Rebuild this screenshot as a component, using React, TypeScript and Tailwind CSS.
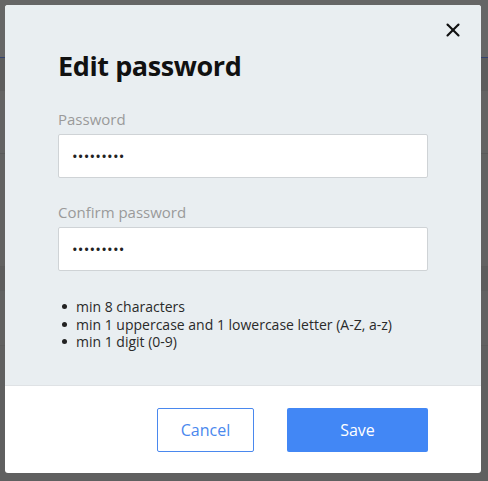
import { X } from 'lucide-react'

const rules = [
  'min 8 characters',
  'min 1 uppercase and 1 lowercase letter (A-Z, a-z)',
  'min 1 digit (0-9)',
]

function Field({ label }: { label: string }) {
  return (
    <div className="flex flex-col">
      <label className="text-[15px] leading-[20px] text-[#9a9a9a]">{label}</label>
      <div className="mt-[5px] flex h-[44px] w-[370px] items-center rounded-[2px] border border-[#cfd3d6] bg-white pl-[13px] text-[15px] tracking-[0.2px] text-[#222]">
        •••••••••
      </div>
    </div>
  )
}

export default function App() {
  return (
    <div className="relative h-[481px] w-[488px] overflow-hidden bg-[#646464]" style={{ fontFamily: '"Open Sans", sans-serif' }}>
      {/* page behind the overlay */}
      <div className="flex flex-col">
        <div className="h-[57px] bg-[#666666]" />
        <div className="h-[1px] bg-[#34426e]" />
        <div className="h-[33px] bg-[#5d5d5d]" />
        <div className="h-[63px] bg-[#636363] border-b border-[#5a5a5a]" />
        <div className="h-[113px] bg-[#626262] border-b border-[#5c5c5c]" />
        <div className="h-[24px] bg-[#5d5d5d]" />
        <div className="h-[55px] bg-[#616161] border-b border-[#5c5c5c]" />
        <div className="h-[135px] bg-[#606060]" />
      </div>

      {/* modal */}
      <div className="absolute left-[5px] top-[5px] flex h-[468px] w-[476px] flex-col overflow-hidden rounded-[3px] bg-white">
        <div className="relative flex h-[381px] flex-col border-b border-[#dfe2e5] bg-[#e9eef1] pl-[53px] pt-[42px]">
          <button className="absolute right-[17px] top-[14px] text-[#111]">
            <X className="size-[22px]" strokeWidth={2.3} />
          </button>
          <h2 className="text-[27px] font-bold leading-[38px] tracking-[-0.4px] text-[#111]">Edit password</h2>
          <div className="mt-[24px]">
            <Field label="Password" />
          </div>
          <div className="mt-[24px]">
            <Field label="Confirm password" />
          </div>
          <ul className="mt-[27px] flex flex-col pl-[4px] text-[14px] leading-[17.5px] text-[#2a2a2a]">
            {rules.map(r => (
              <li key={r} className="flex items-center">
                <span className="mr-[9px] inline-block size-[5px] rounded-full bg-[#222]" />
                {r}
              </li>
            ))}
          </ul>
        </div>
        <div className="flex flex-1 items-start justify-end gap-[33px] pr-[53px] pt-[22px]">
          <button className="h-[44px] w-[97px] rounded-[2px] border border-[#4a88ee] bg-white text-[16px] text-[#4a88ee]">
            Cancel
          </button>
          <button className="h-[44px] w-[141px] rounded-[2px] bg-[#4287f5] text-[16px] text-white">
            Save
          </button>
        </div>
      </div>
    </div>
  )
}
